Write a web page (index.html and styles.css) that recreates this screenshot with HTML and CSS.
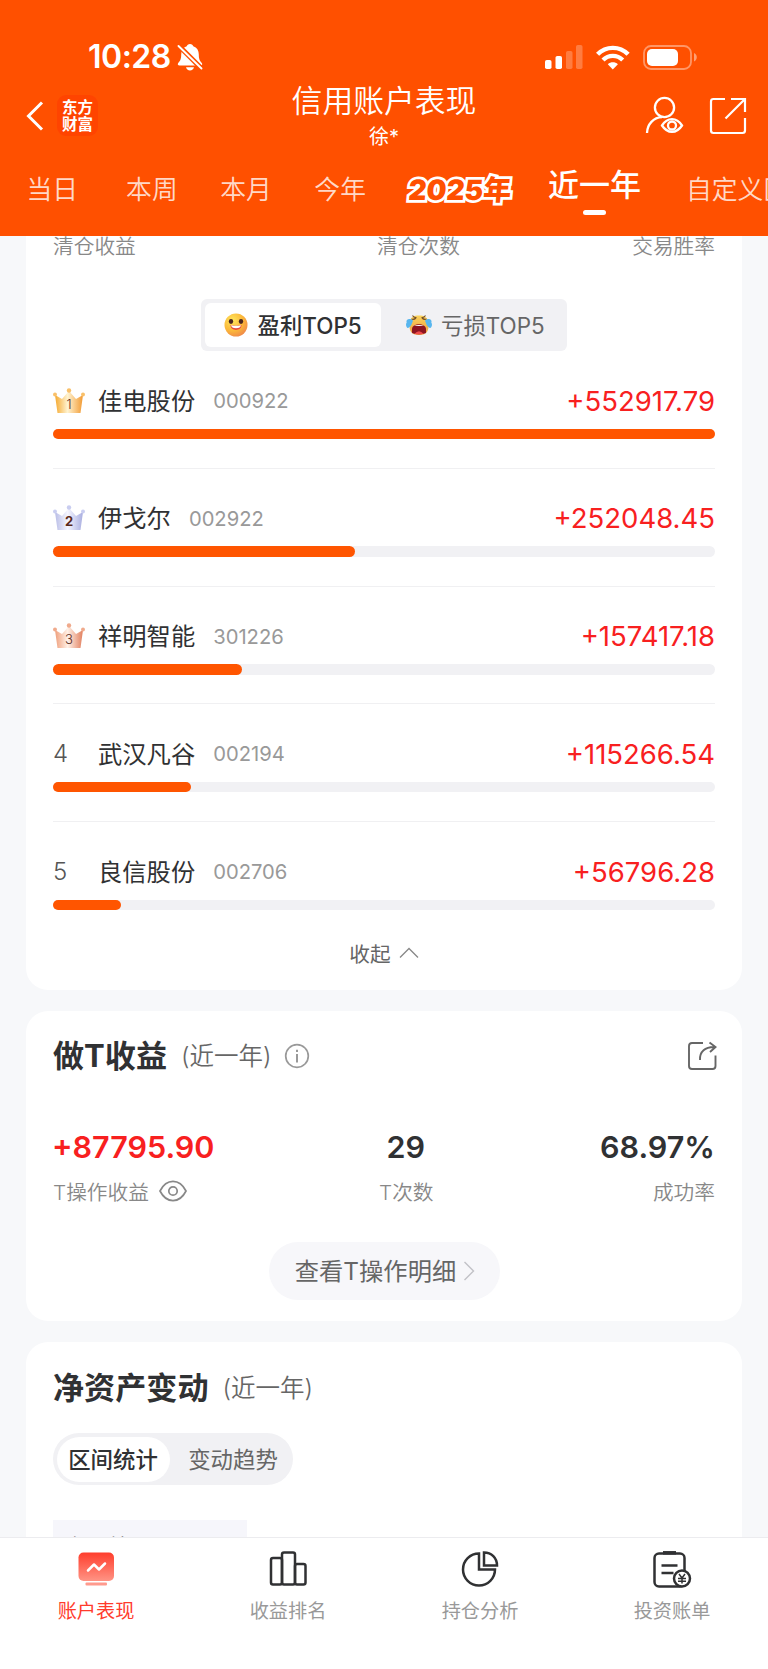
FILE: index.html
```html
<!DOCTYPE html>
<html lang="zh-CN">
<head>
<meta charset="utf-8">
<title>信用账户表现</title>
<link rel="stylesheet" href="styles.css">
</head>
<body>
<div class="app">
  <header class="header">
    <div class="status">
      <span class="clock">10:28</span>
      <svg class="bell" width="26" height="28" viewBox="0 0 26 28"><path fill="#fff" d="M13 1c-1.800 0-3 1-3.300 2.300C6 4.500 4.200 7.500 4.200 11.500c0 5-1.200 6.500-3 8.500-.9 1.200-.3 2.500 1.300 2.500h21c1.600 0 2.200-1.300 1.300-2.500-1.800-2-3-3.500-3-8.500 0-4-1.800-7-5.500-8.200C16 2 14.800 1 13 1zM9 24.200h8c-.4 2-2 3.200-4 3.200s-3.600-1.200-4-3.200z"/><path stroke="#ff5000" stroke-width="5" d="M0 1l26 26"/><path stroke="#fff" stroke-width="1.900" stroke-linecap="round" d="M1.500 3l23 22.500"/></svg>
      <svg class="signals" width="156" height="28" viewBox="0 0 156 28">
        <g fill="#fff"><rect x="1" y="17" width="6.500" height="9" rx="1.800"/><rect x="11.500" y="13" width="6.500" height="13" rx="1.800"/><g opacity=".25"><rect x="22" y="8" width="6.500" height="18" rx="1.800"/><rect x="32" y="2" width="6.500" height="24" rx="1.800"/></g></g>
        <g fill="none" stroke="#fff" stroke-width="4.400"><path d="M53.600 11.300c8.400-8.600 22.100-8.600 30.500 0"/><path d="M59 17c5.600-5.500 14.100-5.500 19.700 0"/></g>
        <path fill="#fff" d="M63.800 21.200c3-2.600 7.100-2.600 10.100 0l-5.100 5.200z"/>
        <rect x="100" y="3" width="47" height="23" rx="7" fill="none" stroke="#fff" stroke-opacity=".4" stroke-width="1.800"/>
        <rect x="103" y="6" width="31" height="17" rx="5" fill="#fff"/><path fill="#fff" opacity=".45" d="M150 10c3.700 1.500 3.700 7 0 8.500z"/>
      </svg>
    </div>
    <div class="nav">
      <svg class="back" width="20" height="32" viewBox="0 0 20 32"><path d="M17 2.500L3.500 16 17 29.500" fill="none" stroke="#fff" stroke-width="3"/></svg>
      <div class="logo">东方<br>财富</div>
      <div class="heading"><h1>信用账户表现</h1><p>徐*</p></div>
      <svg class="user" width="40" height="40" viewBox="0 0 40 40" fill="none" stroke="#fff" stroke-width="2.300"><circle cx="19.500" cy="11.500" r="9.600"/><path d="M2 37c.3-9 6.500-15.500 15-15.800"/><path d="M17 29.500c5.500-8.400 14.500-8.400 20 0-5.500 8.400-14.500 8.400-20 0z"/><circle cx="27" cy="29.500" r="4"/></svg>
      <svg class="open" width="38" height="38" viewBox="0 0 38 38" fill="none" stroke="#fff" stroke-width="2.200"><path d="M16 2H4.500Q2 2 2 4.500v29Q2 36 4.500 36h29q2.500 0 2.500-2.500V21M22 2h14v13M36 2L16.500 21.500"/></svg>
    </div>
    <nav class="tabs">
      <span class="t1">当日</span><span class="t2">本周</span><span class="t3">本月</span><span class="t4">今年</span><span class="year">2025年</span><span class="current">近一年</span><span class="custom">自定义区间</span>
    </nav>
  </header>

  <main class="content">
    <section class="card rank">
      <div class="labels"><span>清仓收益</span><span class="mid">清仓次数</span><span>交易胜率</span></div>
      <div class="switch">
        <div class="opt on">
          <svg width="24" height="24" viewBox="0 0 24 24"><defs><radialGradient id="smile" cx=".35" cy=".3" r=".75"><stop offset="0" stop-color="#ffe65c"/><stop offset=".6" stop-color="#fbb83a"/><stop offset="1" stop-color="#f08a4a"/></radialGradient></defs><circle cx="12" cy="12" r="11.500" fill="url(#smile)"/><ellipse cx="7" cy="8.500" rx="2.200" ry="2.400" fill="#4a2520"/><ellipse cx="17" cy="8.500" rx="2.200" ry="2.400" fill="#4a2520"/><path d="M6.500 12q5.500 1.300 11 0c0 6.500-11 6.500-11 0z" fill="#e9473b"/><path d="M7 12.200q5 1.300 10 0-.5 3-5 3t-5-3z" fill="#fff"/></svg>
          <span>盈利TOP5</span>
        </div>
        <div class="opt">
          <svg width="26" height="24" viewBox="0 0 26 24"><defs><linearGradient id="cry" x2="0" y2="1"><stop offset="0" stop-color="#fbd45c"/><stop offset="1" stop-color="#ee9a3d"/></linearGradient></defs><path d="M3.500 10C4 4 8 2.500 13 2.500S22 4 22.500 10c.5 8-1.500 12-9.500 12S3 18 3.500 10z" fill="url(#cry)"/><path d="M6.500 2.500Q8 5 10.500 4.500M19.500 2.500Q18 5 15.500 4.500M5.500 6q2.500 1 4.500-1M20.500 6q-2.500 1-4.500-1" fill="none" stroke="#74502b" stroke-width="1.100"/><path d="M6 20v-4c0-6.500 14-6.500 14 0v4q-7 2.500-14 0z" fill="#8d1420"/><path d="M8 13q5-2 10 0z" fill="#fff"/><path d="M8.500 20.700q4.500-5 9 0-4.500 1.200-9 0z" fill="#f14b4b"/><path d="M7 7.500C3 4.500-.5 6.500.7 9.500c-1.300 1.500-.7 5 1.300 5.500C5 14 6 10.500 7 7.500zM19 7.500c4-3 7.500-1 6.300 2 1.300 1.500.7 5-1.300 5.500-3-1-4-4.500-5-7.500z" fill="#58b6ee"/></svg>
          <span>亏损TOP5</span>
        </div>
      </div>
      <svg class="defs" width="0" height="0"><defs>
        <linearGradient id="gold"><stop offset="0" stop-color="#f5a92f"/><stop offset=".45" stop-color="#fff3d0"/><stop offset="1" stop-color="#f29a32"/></linearGradient>
        <linearGradient id="silver"><stop offset="0" stop-color="#b9bde6"/><stop offset=".45" stop-color="#f5f6ff"/><stop offset="1" stop-color="#a9aee0"/></linearGradient>
        <linearGradient id="bronze"><stop offset="0" stop-color="#ef9f7c"/><stop offset=".45" stop-color="#fff0e6"/><stop offset="1" stop-color="#e2805f"/></linearGradient>
      </defs></svg>
      <div class="item"><div class="line"><span class="no"><svg width="32" height="26" viewBox="0 0 32 26"><g fill="url(#gold)"><path d="M2 7l7 4 7-8 7 8 7-4-2.500 18h-23z"/></g><g fill="#f9c069"><circle cx="2" cy="6.500" r="2"/><circle cx="16" cy="2.500" r="2.200"/><circle cx="30" cy="6.500" r="2"/></g><text x="16" y="21" class="crown-no">1</text></svg></span><span class="name">佳电股份</span><span class="code">000922</span><span class="sum">+552917.79</span></div><div class="bar"><i style="width:100%"></i></div></div>
      <div class="item"><div class="line"><span class="no"><svg width="32" height="26" viewBox="0 0 32 26"><g fill="url(#silver)"><path d="M2 7l7 4 7-8 7 8 7-4-2.500 18h-23z"/></g><g fill="#c9cdf0"><circle cx="2" cy="6.500" r="2"/><circle cx="16" cy="2.500" r="2.200"/><circle cx="30" cy="6.500" r="2"/></g><text x="16" y="21" class="crown-no strong">2</text></svg></span><span class="name">伊戈尔</span><span class="code">002922</span><span class="sum">+252048.45</span></div><div class="bar"><i style="width:45.6%"></i></div></div>
      <div class="item"><div class="line"><span class="no"><svg width="32" height="26" viewBox="0 0 32 26"><g fill="url(#bronze)"><path d="M2 7l7 4 7-8 7 8 7-4-2.500 18h-23z"/></g><g fill="#f0aa8c"><circle cx="2" cy="6.500" r="2"/><circle cx="16" cy="2.500" r="2.200"/><circle cx="30" cy="6.500" r="2"/></g><text x="16" y="21" class="crown-no">3</text></svg></span><span class="name">祥明智能</span><span class="code">301226</span><span class="sum">+157417.18</span></div><div class="bar"><i style="width:28.500%"></i></div></div>
      <div class="item"><div class="line"><span class="no">4</span><span class="name">武汉凡谷</span><span class="code">002194</span><span class="sum">+115266.54</span></div><div class="bar"><i style="width:20.900%"></i></div></div>
      <div class="item last"><div class="line"><span class="no">5</span><span class="name">良信股份</span><span class="code">002706</span><span class="sum">+56796.28</span></div><div class="bar"><i style="width:10.300%"></i></div></div>
      <div class="fold">收起<svg width="20" height="12" viewBox="0 0 20 12"><path d="M1 10.500L10 1.500l9 9" fill="none" stroke="#888" stroke-width="1.300"/></svg></div>
    </section>

    <section class="card trade">
      <div class="title"><h2>做T收益</h2><span class="period">(近一年)</span>
        <svg class="info" width="26" height="26" viewBox="0 0 26 26" fill="none" stroke="#999" stroke-width="1.700"><circle cx="13" cy="13" r="11.300"/><path d="M13 11v8.500" stroke-width="2"/><path d="M13 6.800v2.200" stroke-width="2"/></svg>
        <svg class="share" width="30" height="30" viewBox="0 0 30 30" fill="none" stroke="#666" stroke-width="1.900"><path d="M16 2H5Q2 2 2 5v20q0 3 3 3h20.500q3 0 3-3V14.500M13 19C12.500 11 18 5.500 28 6M22.500 1.500L28.500 6 23 11"/></svg>
      </div>
      <div class="stats">
        <div><b class="red">+87795.90</b><span>T操作收益<svg width="28" height="22" viewBox="0 0 28 22" fill="none" stroke="#888" stroke-width="1.700"><path d="M1 11C7.500-1.800 20.500-1.800 27 11 20.500 23.800 7.500 23.800 1 11z"/><circle cx="14" cy="11" r="4.200"/></svg></span></div>
        <div class="center"><b>29</b><span>T次数</span></div>
        <div class="right"><b>68.97%</b><span>成功率</span></div>
      </div>
      <div class="more"><span>查看T操作明细</span><svg width="12" height="20" viewBox="0 0 12 20"><path d="M1.500 1l9 9-9 9" fill="none" stroke="#c2c2c6" stroke-width="1.400"/></svg></div>
    </section>

    <section class="card assets">
      <div class="title"><h2>净资产变动</h2><span class="period">(近一年)</span></div>
      <div class="pills"><span class="on">区间统计</span><span>变动趋势</span></div>
      <div class="block">银证转入</div>
    </section>
  </main>

  <footer class="tabbar">
    <div class="on"><svg width="40" height="40" viewBox="0 0 40 40"><defs><linearGradient id="screen" x2="0" y2="1"><stop offset="0" stop-color="#ff3d2c"/><stop offset="1" stop-color="#ff9485"/></linearGradient></defs><rect x="2.500" y="3.500" width="35.500" height="28.500" rx="5" fill="url(#screen)"/><rect x="9.500" y="33.500" width="21.500" height="3" rx="1" fill="#ff9a8d"/><path d="M12 21.500l6-6 5 5 6-6" fill="none" stroke="#fff" stroke-width="2.500" stroke-linecap="round" stroke-linejoin="round"/></svg>账户表现</div>
    <div><svg width="40" height="40" viewBox="0 0 40 40" fill="none" stroke="#303133" stroke-width="2.500"><rect x="3" y="9" width="11" height="26.500" rx="2"/><rect x="14" y="3.500" width="13" height="32" rx="2"/><rect x="27" y="15" width="10.500" height="20.500" rx="2"/></svg>收益排名</div>
    <div><svg width="40" height="40" viewBox="0 0 40 40" fill="none" stroke="#303133" stroke-width="2.500"><path d="M19 4.500A16 16 0 1 0 35 20.500H19z"/><path d="M24 3.500v13h13C37 9 31.500 3.500 24 3.500z"/></svg>持仓分析</div>
    <div><svg width="40" height="40" viewBox="0 0 40 40" fill="none" stroke="#303133" stroke-width="2.500"><rect x="2.500" y="4.500" width="30" height="33" rx="4.500"/><path d="M11 3.800h13" stroke-width="3.500"/><path d="M9.500 16.500h16M9.500 24h12"/><circle cx="30" cy="29.500" r="8" fill="#fff"/><path d="M27 25l3 4 3-4M26 29.500h8M26 32.300h8M30 29v5.500" stroke-width="1.500"/></svg>投资账单</div>
  </footer>
</div>
</body>
</html>
```
FILE: styles.css
```css
* { box-sizing: border-box; }
body {
  margin: 0;
  font-family: Inter, "Noto Sans CJK SC", sans-serif;
  color: #303133;
  font-size: 20.700px;
}
svg { display: block; flex: none; }
h1, h2, p { margin: 0; }
.app {
  width: 768px;
  height: 1669px;
  display: flex;
  flex-direction: column;
  overflow: hidden;
  background: #f7f8fa;
}

.header {
  height: 236px;
  flex: none;
  background: #ff5000;
  color: #fff;
  overflow: hidden;
}
.status {
  height: 85px;
  padding: 29px 0 0 88px;
  display: flex;
  align-items: center;
}
.clock { width: 89px; font-size: 32px; font-weight: 600; line-height: 54px; letter-spacing: -.5px; }
.signals { margin: 0 68px 0 auto; }
.nav { height: 65px; display: flex; padding-left: 25px; align-items: flex-start; }
.back { margin-top: 15px; }
.logo {
  width: 41px;
  height: 41px;
  margin: 10px 0 0 12px;
  padding-top: 3px;
  text-align: center;
  border-radius: 9px;
  background: #ff4400;
  font: 700 15.500px/17px "Noto Sans CJK SC", sans-serif;
}
.heading { width: 190px; margin: 0 auto 0 191px; text-align: center; }
.heading h1 { font-size: 30.800px; font-weight: 350; line-height: 32px; white-space: nowrap; }
.heading p { font-size: 20px; line-height: 26px; margin-top: 7px; }
.user { margin: 11px 24px 0 0; }
.open { margin: 12px 21px 0 0; }
.tabs {
  height: 80px;
  width: 820px;
  display: flex;
  align-items: center;
  font-size: 25.800px;
  font-weight: 350;
  line-height: 40px;
  white-space: nowrap;
  color: rgba(255, 255, 255, .8);
}
.tabs span { flex: none; }
.t1 { margin-left: 26.500px; }
.t2 { margin-left: 48px; }
.t3 { margin-left: 42.500px; }
.t4 { margin-left: 42.500px; }
.tabs .year {
  width: 112px;
  margin-left: 38px;
  text-align: center;
  font-size: 28px;
  font-weight: 900;
  color: #ff5000;
  -webkit-text-stroke: 5.500px #fff;
  stroke-linejoin: round;
  paint-order: stroke fill;
  transform: skewX(-5deg);
}
.tabs .current {
  margin-left: 32px;
  display: flex;
  flex-direction: column;
  align-items: center;
  font-size: 31px;
  font-weight: 500;
  color: #fff;
}
.current::after { content: ""; width: 23px; height: 5.500px; border-radius: 3px; background: #fff; margin-top: 5px; }
.custom { margin-left: 45px; }

.content { flex: 1; min-height: 0; overflow: hidden; padding: 0 26px; }
.card { background: #fff; border-radius: 22px; padding: 0 27px; }
.rank { height: 754px; border-radius: 0 0 22px 22px; overflow: hidden; }
.labels { display: flex; height: 20px; line-height: 22px; color: #888; justify-content: space-between; font-weight: 350; }
.labels .mid { margin-left: 69px; }
.switch {
  width: 366px;
  height: 52px;
  margin: 43px auto 0 148px;
  padding: 4px;
  display: flex;
  border-radius: 6px;
  background: #f1f1f4;
}
.opt { width: 176px; display: flex; align-items: center; padding-left: 19px; gap: 9.500px; font-size: 22.400px; color: #666; }
.opt span { padding-bottom: 2px; }
.opt + .opt { padding-left: 25px; gap: 9px; }
.opt.on { background: #fff; border-radius: 6px; color: #303133; font-weight: 500; }
.defs { position: absolute; }
.item { height: 117.800px; padding-top: 29.500px; border-bottom: 1px solid #f0f0f2; }
.item.last { border: 0; height: 115.800px; }
.line { display: flex; align-items: center; height: 40px; }
.no { width: 45px; font-size: 24px; font-weight: 350; color: #555; }
.name { font-size: 24.300px; padding-bottom: 3px; }
.code { font-size: 20.200px; color: #999; margin-left: 18px; }
.sum { margin-left: auto; font-size: 27.500px; color: #f8201f; }
.bar { height: 10.500px; border-radius: 6px; background: #f1f1f4; margin-top: 8px; }
.bar i { display: block; height: 100%; border-radius: 6px; background: #ff5500; }
.crown-no { font-size: 13px; text-anchor: middle; fill: #5a2a1c; }
.crown-no.strong { font-weight: 700; }
.fold { display: flex; justify-content: center; align-items: center; gap: 8px; height: 30px; color: #666; }

.trade { height: 310px; margin-top: 21px; }
.title { display: flex; align-items: center; padding-top: 25px; height: 65px; line-height: 40px; }
.title h2 { font-size: 31.100px; font-weight: 700; }
.period { font-size: 24.500px; font-weight: 350; color: #666; margin-left: 14px; }
.info { margin-left: 12px; }
.share { margin: 0 -1.500px 0 auto; }
.stats { display: flex; justify-content: space-between; margin-top: 47px; }
.stats div { display: flex; flex-direction: column; }
.stats b { font-size: 30.500px; font-weight: 600; line-height: 48px; margin-left: -1px; }
.stats span { display: flex; align-items: center; gap: 10px; height: 30px; margin-top: 5px; color: #888; font-weight: 350; }
.stats .red { color: #f8201f; }
.stats .center { align-items: center; margin-left: -3px; }
.stats .right { align-items: flex-end; }
.more {
  width: 231px;
  height: 58px;
  margin: 36px auto 0;
  display: flex;
  align-items: center;
  justify-content: center;
  gap: 7px;
  padding-left: 2px;
  border-radius: 29px;
  background: #f7f7fa;
  font-size: 24.300px;
  color: #666;
}
.more span { padding-bottom: 3px; }

.assets { height: 400px; margin-top: 21px; }
.assets .title { height: 66px; }
.pills { display: flex; width: 240px; height: 52px; margin-top: 25px; padding: 3.500px; border-radius: 26px; background: #f1f1f4; font-size: 22.400px; line-height: 45px; color: #666; }
.pills span { width: 113px; flex: none; text-align: center; margin-right: 7px; }
.pills .on { background: #fff; border-radius: 23px; color: #303133; font-weight: 500; }
.block { width: 194px; height: 80px; margin-top: 35px; padding: 14px 18px; background: #f6f6fb; font-size: 19px; line-height: 26px; color: #666; }

.tabbar { flex: none; height: 132px; display: flex; background: #fff; border-top: 1px solid #ececef; }
.tabbar div { flex: 1; display: flex; flex-direction: column; align-items: center; padding-top: 11px; font-size: 19.200px; line-height: 26px; color: #999; }
.tabbar svg { margin-bottom: 9px; }
.tabbar .on { color: #ff3b2c; }
```
